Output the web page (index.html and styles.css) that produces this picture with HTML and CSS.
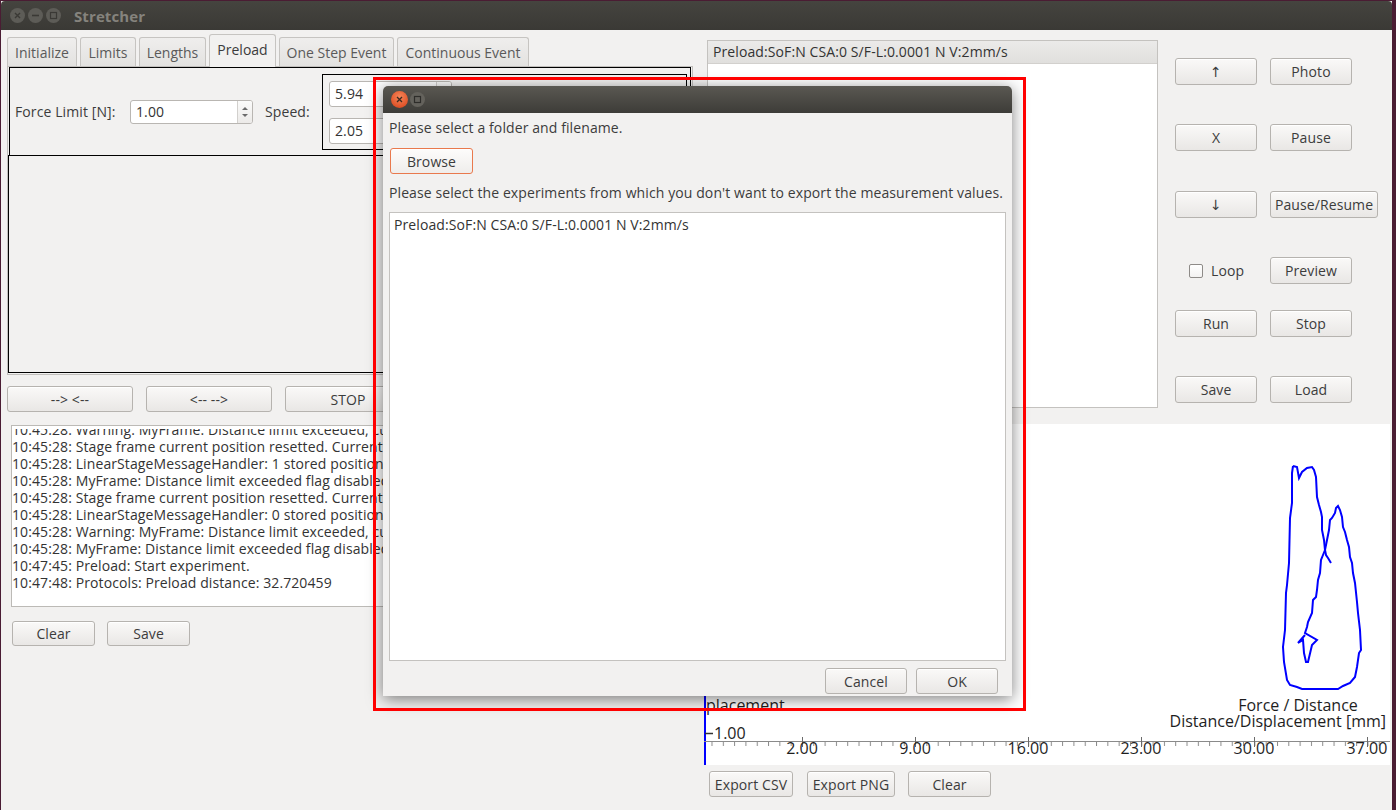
FILE: index.html
```html
<!DOCTYPE html>
<html>
<head>
<meta charset="utf-8">
<title>Stretcher</title>
<link rel="stylesheet" href="styles.css">
</head>
<body>
<div class="desk">
  <div class="win">
    <div class="titlebar">
      <span class="wbtn"><svg viewBox="0 0 15 15" width="15" height="15"><path d="M5 5 L10 10 M10 5 L5 10" stroke="#3a3935" stroke-width="1.4"/></svg></span>
      <span class="wbtn"><svg viewBox="0 0 15 15" width="15" height="15"><path d="M4 7.5 H11" stroke="#3a3935" stroke-width="1.6"/></svg></span>
      <span class="wbtn"><svg viewBox="0 0 15 15" width="15" height="15"><rect x="4.5" y="4.5" width="6" height="6" fill="none" stroke="#3a3935" stroke-width="1.2"/></svg></span>
      <span class="wtitle">Stretcher</span>
    </div>
    <div class="main">
      <div class="left">
        <div class="tabs">
          <div class="tab w-init">Initialize</div>
          <div class="tab w-lim">Limits</div>
          <div class="tab w-len">Lengths</div>
          <div class="tab w-pre sel">Preload</div>
          <div class="tab w-one">One Step Event</div>
          <div class="tab w-cont">Continuous Event</div>
        </div>
        <div class="tabpanel">
          <div class="formbox">
            <span class="lbl lbl-force">Force Limit [N]:</span>
            <div class="spin spin-force"><span class="spinval">1.00</span><span class="spinarr"><i class="up"></i><i class="dn"></i></span></div>
            <span class="lbl lbl-speed">Speed:</span>
            <div class="speedbox">
              <div class="spin spin-speed"><span class="spinval">5.94</span><span class="spinarr"><i class="up"></i><i class="dn"></i></span></div>
              <div class="spin spin-speed"><span class="spinval">2.05</span><span class="spinarr"><i class="up"></i><i class="dn"></i></span></div>
            </div>
          </div>
          <div class="emptybox"></div>
        </div>
        <div class="moverow">
          <button class="btn mv">--&gt; &lt;--</button>
          <button class="btn mv">&lt;-- --&gt;</button>
          <button class="btn mv">STOP</button>
        </div>
        <div class="log">
          <div class="logclip">
            <div class="loginner">
              <div>10:45:28: Warning: MyFrame: Distance limit exceeded, current position: 0.000000</div>
              <div>10:45:28: Stage frame current position resetted. Current position: 0.000000</div>
              <div>10:45:28: LinearStageMessageHandler: 1 stored positions removed.</div>
              <div>10:45:28: MyFrame: Distance limit exceeded flag disabled.</div>
              <div>10:45:28: Stage frame current position resetted. Current position: 0.000000</div>
              <div>10:45:28: LinearStageMessageHandler: 0 stored positions removed.</div>
              <div>10:45:28: Warning: MyFrame: Distance limit exceeded, current position: 0.000000</div>
              <div>10:45:28: MyFrame: Distance limit exceeded flag disabled.</div>
              <div>10:47:45: Preload: Start experiment.</div>
              <div>10:47:48: Protocols: Preload distance: 32.720459</div>
            </div>
          </div>
        </div>
        <div class="logbtns">
          <button class="btn sm">Clear</button>
          <button class="btn sm">Save</button>
        </div>
      </div>
      <div class="right">
        <div class="toprow">
          <div class="explist">
            <div class="exphdr">Preload:SoF:N CSA:0 S/F-L:0.0001 N V:2mm/s</div>
          </div>
          <div class="ctrls">
            <div class="crow r1"><button class="btn cb">&#8593;</button><button class="btn cb">Photo</button></div>
            <div class="crow r2"><button class="btn cb">X</button><button class="btn cb">Pause</button></div>
            <div class="crow r3"><button class="btn cb">&#8595;</button><button class="btn cb wide">Pause/Resume</button></div>
            <div class="crow r4"><label class="chk"><span class="box"></span>Loop</label><button class="btn cb">Preview</button></div>
            <div class="crow r5"><button class="btn cb">Run</button><button class="btn cb">Stop</button></div>
            <div class="crow r6"><button class="btn cb">Save</button><button class="btn cb">Load</button></div>
          </div>
        </div>
        <div class="chart">
          <svg width="686" height="341" viewBox="0 0 686 341">
            <defs>
              <pattern id="ticks" x="7.5" y="0" width="11.31" height="341" patternUnits="userSpaceOnUse">
                <line x1="0.5" y1="317" x2="0.5" y2="322" stroke="#8a8a8a" stroke-width="1"/>
              </pattern>
            </defs>
            <line x1="1" y1="0" x2="1" y2="341" stroke="#0000ff" stroke-width="2"/>
            <line x1="0" y1="317.5" x2="686" y2="317.5" stroke="#8a8a8a" stroke-width="1"/>
            <rect x="0" y="317" width="686" height="6" fill="url(#ticks)"/>
            <g stroke="#6a6a6a" stroke-width="1">
              <line x1="98.5" y1="313" x2="98.5" y2="323"/>
              <line x1="211.5" y1="313" x2="211.5" y2="323"/>
              <line x1="324.5" y1="313" x2="324.5" y2="323"/>
              <line x1="437.5" y1="313" x2="437.5" y2="323"/>
              <line x1="550.5" y1="313" x2="550.5" y2="323"/>
              <line x1="663.5" y1="313" x2="663.5" y2="323"/>
            </g>
            <line x1="1" y1="309.5" x2="9" y2="309.5" stroke="#333" stroke-width="1.5"/>
            <g class="ctext">
              <text x="98" y="330" text-anchor="middle">2.00</text>
              <text x="211" y="330" text-anchor="middle">9.00</text>
              <text x="324" y="330" text-anchor="middle">16.00</text>
              <text x="437" y="330" text-anchor="middle">23.00</text>
              <text x="550" y="330" text-anchor="middle">30.00</text>
              <text x="663" y="330" text-anchor="middle">37.00</text>
              <text x="10" y="315">1.00</text>
              <text x="2" y="287">placement</text>
              <text x="594" y="287" text-anchor="middle">Force / Distance</text>
              <text x="682" y="303" text-anchor="end">Distance/Displacement [mm]</text>
            </g>
            <polyline fill="none" stroke="#0000ff" stroke-width="2" points="589,42 588,49 588,79 586,94 585,139 583,161 582,169 581,206 579,223 580,238 583,256 586,261 593,263 598,265 634,265 639,262 646,259 651,253 653,243 655,229 657,226 656,206 654,189 653,178 651,159 649,149 648,139 646,133 645,123 643,116 641,108 639,103 638,93 636,86 634,82 632,84 631,89 628,94 626,96 625,106 623,116 621,126 619,131 617,136 616,149 614,156 613,166 612,173 609,176 608,189 604,198 603,203 601,209 613,216 608,221 604,238 602,238 600,229 599,216 594,219 601,211"/>
            <polyline fill="none" stroke="#0000ff" stroke-width="2" points="589,42 593,43 595,54 598,48 603,44 608,43 610,46 612,53 613,73 615,81 617,88 618,93 618,106 620,116 621,126 622,131 624,134 627,139"/>
          </svg>
        </div>
        <div class="chartbtns">
          <button class="btn eb1">Export CSV</button>
          <button class="btn eb2">Export PNG</button>
          <button class="btn eb3">Clear</button>
        </div>
      </div>
    </div>
  </div>

  <div class="dialog">
    <div class="dtitle">
      <span class="dclose"><svg viewBox="0 0 17 17" width="17" height="17"><path d="M6 6 L11 11 M11 6 L6 11" stroke="#3a2a20" stroke-width="1.3"/></svg></span>
      <span class="dmax"><svg viewBox="0 0 15 15" width="15" height="15"><rect x="4.5" y="4.5" width="6" height="6" fill="none" stroke="#2e2d2a" stroke-width="1.2"/></svg></span>
    </div>
    <div class="dbody">
      <p class="dtext t1">Please select a folder and filename.</p>
      <button class="btn browse">Browse</button>
      <p class="dtext t2">Please select the experiments from which you don't want to export the measurement values.</p>
      <div class="dlist">
        <div class="ditem">Preload:SoF:N CSA:0 S/F-L:0.0001 N V:2mm/s</div>
      </div>
      <div class="dfoot">
        <button class="btn db">Cancel</button>
        <button class="btn db">OK</button>
      </div>
    </div>
  </div>
  <div class="highlight"></div>
</div>
</body>
</html>
```
FILE: styles.css
```css
* { box-sizing: border-box; }
html, body { margin: 0; padding: 0; }
body {
  font-family: "Open Sans", "Noto Sans", "DejaVu Sans", sans-serif;
  font-size: 14px;
  letter-spacing: 0.1px;
  color: #3c3c3c;
}
.desk {
  position: relative;
  width: 1396px;
  height: 810px;
  background: #4a1c33;
  padding: 1px 4px 0 1px;
  overflow: hidden;
}
.win {
  width: 1391px;
  height: 809px;
  background: #f2f1f0;
}
.titlebar {
  height: 29px;
  background: linear-gradient(#45443f, #3a3935);
  display: flex;
  align-items: center;
  padding-left: 9px;
  border-radius: 4px 4px 0 0;
}
.wbtn {
  width: 15px;
  height: 15px;
  border-radius: 50%;
  background: #5d5c57;
  margin-right: 3px;
  display: flex;
}
.wtitle {
  margin-left: 10px;
  font-weight: bold;
  font-size: 15px;
  color: #85837d;
}
.main {
  display: flex;
  padding: 4px 0 0 6px;
}
.left { width: 686px; }
.right { width: 686px; margin-left: 11px; padding-top: 6px; }

/* Tabs */
.tabs {
  height: 32px;
  display: flex;
  align-items: flex-end;
  gap: 3px;
}
.tab {
  height: 29px;
  border: 1px solid #c6c4c1;
  border-bottom: none;
  border-radius: 3px 3px 0 0;
  background: linear-gradient(#efeeed, #e3e2e0);
  color: #5a5a5a;
  display: flex;
  align-items: center;
  justify-content: center;
  white-space: nowrap;
  letter-spacing: 0;
}
.tab.sel {
  height: 33px;
  margin-bottom: -1px;
  background: #f2f1f0;
  color: #3c3c3c;
  position: relative;
  z-index: 1;
  padding-bottom: 3px;
}
.w-init { width: 70px; }
.w-lim { width: 56px; }
.w-len { width: 67px; }
.w-pre { width: 67px; }
.w-one { width: 115px; }
.w-cont { width: 132px; }

.tabpanel {
  height: 309px;
  border: 1px solid #c1bfbc;
}
.formbox {
  margin-left: 1px;
  width: 682px;
  height: 89px;
  border: 1px solid #000;
  display: flex;
  align-items: center;
  padding-left: 5px;
}
.lbl { white-space: nowrap; }
.lbl-force { width: 115px; }
.lbl-speed { width: 57px; margin-left: 12px; }
.spin {
  height: 24px;
  background: #fff;
  border: 1px solid #b9b6b2;
  border-radius: 3px;
  display: flex;
  align-items: center;
}
.spin-force { width: 123px; }
.spinval { flex: 1; padding-left: 5px; color: #333; }
.spinarr {
  width: 15px;
  height: 100%;
  border-left: 1px solid #d2d0cd;
  background: linear-gradient(#fbfbfa, #eceae8);
  border-radius: 0 2px 2px 0;
  display: flex;
  flex-direction: column;
  justify-content: center;
  align-items: center;
  gap: 4px;
}
.spinarr i {
  width: 0; height: 0;
  border-left: 3px solid transparent;
  border-right: 3px solid transparent;
}
.spinarr .up { border-bottom: 3px solid #6b6b6b; }
.spinarr .dn { border-top: 3px solid #6b6b6b; }
.speedbox {
  width: 365px;
  height: 76px;
  border: 1px solid #000;
  padding: 6px 0 0 6px;
  display: flex;
  flex-direction: column;
  gap: 11px;
}
.spin-speed { width: 123px; height: 26px; }
.emptybox {
  margin-top: -1px;
  width: 683px;
  height: 218px;
  border: 1px solid #000;
}

/* Buttons */
.btn {
  font-family: inherit;
  font-size: 14px;
  letter-spacing: 0.1px;
  color: #3c3c3c;
  background: linear-gradient(#faf9f8, #e9e7e5);
  border: 1px solid #b6b3af;
  border-radius: 3px;
  padding: 0;
  height: 26px;
  display: inline-flex;
  align-items: center;
  justify-content: center;
  white-space: nowrap;
  box-shadow: inset 0 1px 0 #fff;
}
.moverow {
  margin-top: 11px;
  display: flex;
  gap: 13px;
}
.mv { width: 126px; }
.log {
  margin: 13px 0 0 4px;
  width: 679px;
  height: 182px;
  background: #fff;
  border: 1px solid #bcbab6;
  padding-top: 3px;
}
.logclip {
  height: 100%;
  overflow: hidden;
}
.loginner {
  margin-top: -8px;
  line-height: 17px;
  white-space: nowrap;
  color: #333;
}
.logbtns {
  margin: 14px 0 0 5px;
  display: flex;
  gap: 12px;
}
.sm { width: 83px; height: 25px; }

/* Right side */
.toprow { display: flex; }
.explist {
  margin-left: 3px;
  width: 451px;
  height: 368px;
  background: #fff;
  border: 1px solid #c4c2bf;
}
.exphdr {
  height: 23px;
  background: linear-gradient(#ebeae9, #e0dfdd);
  border-bottom: 1px solid #d2d0cd;
  padding-left: 5px;
  line-height: 22px;
  color: #333;
  white-space: nowrap;
}
.ctrls {
  margin-left: 17px;
  padding-top: 18px;
}
.crow { display: flex; gap: 13px; height: 27px; align-items: center; }
.r2 { margin-top: 39px; }
.r3 { margin-top: 40px; }
.r4 { margin-top: 39px; }
.r5 { margin-top: 26px; }
.r6 { margin-top: 39px; }
.cb { width: 82px; height: 27px; }
.cb.wide { width: 108px; }
.chk {
  width: 82px;
  display: flex;
  align-items: center;
  padding-left: 14px;
  gap: 8px;
  color: #3c3c3c;
}
.box {
  width: 14px; height: 14px;
  border: 1px solid #8e8b88;
  border-radius: 2px;
  background: linear-gradient(#fff, #f3f2f1);
}
.chart {
  margin-top: 16px;
  width: 686px;
  height: 341px;
  background: #fff;
}
.chart svg { display: block; }
.ctext text {
  font-family: "Open Sans", "Noto Sans", sans-serif;
  font-size: 16px;
  fill: #1e1e1e;
  letter-spacing: 0;
}
.chartbtns {
  margin: 6px 0 0 5px;
  display: flex;
}
.eb1 { width: 84px; }
.eb2 { width: 88px; margin-left: 14px; }
.eb3 { width: 83px; margin-left: 13px; }

/* Dialog */
.dialog {
  position: absolute;
  left: 383px;
  top: 86px;
  width: 629px;
  height: 610px;
  background: #f2f1f0;
  border-radius: 5px 5px 0 0;
  box-shadow: 0 3px 16px rgba(0,0,0,0.5);
  z-index: 5;
}
.dtitle {
  height: 27px;
  border-radius: 5px 5px 0 0;
  background: linear-gradient(#5a5852, #3d3c38);
  display: flex;
  align-items: center;
  padding-left: 8px;
  gap: 2px;
}
.dclose {
  width: 17px; height: 17px;
  border-radius: 50%;
  background: radial-gradient(circle at 50% 35%, #f6875a, #e0542a 70%, #c24417);
  display: flex;
}
.dmax {
  width: 15px; height: 15px;
  border-radius: 50%;
  background: #64625c;
  display: flex;
}
.dbody {
  padding: 0 6px;
}
.dtext {
  margin: 0;
  line-height: 16px;
  white-space: nowrap;
  color: #3c3c3c;
}
.t1 { margin-top: 7px; }
.browse {
  margin: 12px 0 0 1px;
  width: 83px;
  border-color: #e9794d;
  background: linear-gradient(#fdfcfb, #efedeb);
}
.t2 { margin-top: 11px; }
.dlist {
  margin-top: 11px;
  width: 617px;
  height: 449px;
  background: #fff;
  border: 1px solid #c4c2bf;
  padding: 4px 4px;
  line-height: 16px;
  color: #333;
}
.dfoot {
  margin-top: 7px;
  display: flex;
  justify-content: flex-end;
  gap: 9px;
  padding-right: 8px;
}
.db { width: 82px; }

.highlight {
  position: absolute;
  left: 373px;
  top: 77px;
  width: 653px;
  height: 634px;
  border: 3px solid #ff0000;
  z-index: 6;
  pointer-events: none;
}
```
